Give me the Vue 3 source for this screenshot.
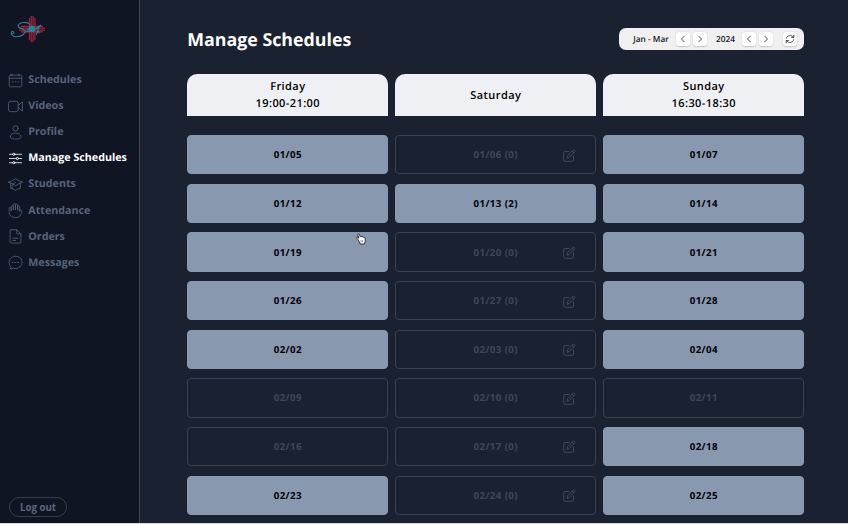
<script setup>
const nav = [
  { name: 'Schedules', icon: 'calendar' },
  { name: 'Videos', icon: 'video' },
  { name: 'Profile', icon: 'profile' },
  { name: 'Manage Schedules', icon: 'sliders', active: true },
  { name: 'Students', icon: 'cap' },
  { name: 'Attendance', icon: 'hand' },
  { name: 'Orders', icon: 'doc' },
  { name: 'Messages', icon: 'chat' },
]

const columns = [
  { day: 'Friday', time: '19:00-21:00' },
  { day: 'Saturday' },
  { day: 'Sunday', time: '16:30-18:30' },
]

const off = (label) => ({ label, off: true })
const on = (label) => ({ label })
const edit = (label) => ({ label, off: true, edit: true })

const cells = [
  on('01/05'), edit('01/06 (0)'), on('01/07'),
  on('01/12'), on('01/13 (2)'), on('01/14'),
  on('01/19'), edit('01/20 (0)'), on('01/21'),
  on('01/26'), edit('01/27 (0)'), on('01/28'),
  on('02/02'), edit('02/03 (0)'), on('02/04'),
  off('02/09'), edit('02/10 (0)'), off('02/11'),
  off('02/16'), edit('02/17 (0)'), on('02/18'),
  on('02/23'), edit('02/24 (0)'), on('02/25'),
]
</script>

<template>
  <div class="app">
    <aside class="sidebar">
      <svg class="logo" viewBox="0 0 36 28" fill="none">
        <g stroke="#a02336" stroke-width="1.25">
          <path d="M19.5 3v22M21.3 1v26M23.1 1v26M24.9 3v22" />
          <path d="M11 11.4h22M9 13.2h26M9 15h26M11 16.8h22" />
        </g>
        <circle cx="22" cy="14" r="3.3" fill="#168ba5" />
        <path d="M20 9.5C17 6 9 7 8 11c0 3 8 2 7 6C13 22 4 23 2 20c-1.200-2-.500-4 .800-3.800 1.500.300 1 2.300-.200 2.500M15 17c4 0 12-3 16-7-3 2-4 7-4.500 9.500M26.500 19c1-3 2.500-3 2.500-1M17 15l4-3" stroke="#347f9a" stroke-width="1.100" stroke-linecap="round" />
      </svg>

      <nav class="nav">
        <a v-for="item in nav" :key="item.name" class="nav-item" :class="{ active: item.active }">
          <svg class="nav-icon" viewBox="0 0 16 16">
            <g v-if="item.icon === 'calendar'">
              <rect x="1.300" y="2.300" width="13.400" height="12.400" rx="1.300" />
              <path d="M1.300 5.600h13.400M4.200 1v2.200M11.800 1v2.200" />
              <path d="M4.500 9.400h1M7.500 9.400h1M10.500 9.400h1" />
            </g>
            <g v-else-if="item.icon === 'video'">
              <rect x=".500" y="2.500" width="10.300" height="11" rx="2" />
              <path d="M10.800 7l4.500-4v10l-4.500-4" />
            </g>
            <g v-else-if="item.icon === 'profile'">
              <circle cx="8" cy="3.600" r="2.800" />
              <path d="M2.500 12.300C2.500 9.900 5 8.600 8 8.600s5.800 1.300 5.800 3.700c0 1.900-1.600 2.700-5.800 2.700s-5.500-.8-5.500-2.700z" />
            </g>
            <g v-else-if="item.icon === 'sliders'">
              <path d="M1.500 3.500H5M7.400 3.500h7.100M1.500 8h7.300M11.200 8h3.300M1.500 12.500H5M7.400 12.500h7.100" />
              <circle cx="6.200" cy="3.500" r="1.200" />
              <circle cx="10" cy="8" r="1.200" />
              <circle cx="6.200" cy="12.500" r="1.200" />
            </g>
            <g v-else-if="item.icon === 'cap'">
              <path d="M.5 5.500C3.500 4.600 6 3.300 8 1.800c2 1.500 4.500 2.800 7.500 3.700-2.800.8-5.500 2.200-7.500 3.900C6 7.700 3.300 6.300.5 5.500z" />
              <path d="M2.800 6.600v5.600c2 .2 3.800 1 5.200 2.200 1.400-1.200 3.200-2 5.200-2.200V6.600M8 5.800C5.800 6.600 4.500 8 4.500 10v2.500" />
            </g>
            <g v-else-if="item.icon === 'hand'">
              <path d="M3.500 8V3.800c0-1.400 2.200-1.400 2.200 0V7.500V1.500c0-1.400 2.300-1.400 2.300 0v6V2.200c0-1.300 2.300-1.300 2.300 0v5.500V4c0-1.300 2-1.300 2 0v5c.3-1.200.8-1.900 1.600-1.700.8.200.9.900.7 1.700-.6 4-2.300 6.500-6.300 6.500-4.900 0-7-2.500-7-6.200V5.500c0-1.400 2.200-1.400 2.200 0z" />
            </g>
            <g v-else-if="item.icon === 'doc'">
              <path d="M3.200.800h6.200l4.400 4.400V14a1 1 0 0 1-1 1H3.200a1 1 0 0 1-1-1V1.800a1 1 0 0 1 1-1zM9.300.800v3.400a1 1 0 0 0 1 1h3.400M5.200 9.800h5.400M5.200 12.300h3" />
            </g>
            <g v-else>
              <path d="M2.300 14.800c.9-.5 1.200-1.200.8-2C.2 10 .7 5.300 3.400 3c3.200-2.400 7.400-2 9.700.2 2.600 2.600 2.400 6.900-.2 9.400-2.200 2-5 2.200-7.200 1.400-.9.800-2.300 1.100-3.400.8z" />
              <path d="M4.700 8h.9M7.600 8h.9M10.500 8h.9" />
            </g>
          </svg>
          <span>{{ item.name }}</span>
        </a>
      </nav>

      <button class="logout">Log out</button>
    </aside>

    <main class="main">
      <header class="top">
        <h1>Manage Schedules</h1>
        <div class="picker">
          <span class="period">Jan - Mar</span>
          <button class="step"><svg viewBox="0 0 14 14"><path d="M8.200 4.200L5.500 7l2.700 2.800" /></svg></button>
          <button class="step"><svg viewBox="0 0 14 14"><path d="M5.800 4.200L8.500 7l-2.700 2.800" /></svg></button>
          <span class="year">2024</span>
          <button class="step"><svg viewBox="0 0 14 14"><path d="M8.200 4.200L5.500 7l2.700 2.800" /></svg></button>
          <button class="step"><svg viewBox="0 0 14 14"><path d="M5.800 4.200L8.500 7l-2.700 2.800" /></svg></button>
          <button class="step refresh">
            <svg viewBox="0 0 14 14"><path d="M3.400 6.200C3.900 3.500 8.300 2 10.500 5.300M10.800 3v2.400H8.500M10.600 7.800C10.100 10.500 5.700 12 3.500 8.700M3.200 11V8.600h2.300" /></svg>
          </button>
        </div>
      </header>

      <div class="grid heads">
        <div v-for="c in columns" :key="c.day" class="head">
          <span>{{ c.day }}</span>
          <span v-if="c.time">{{ c.time }}</span>
        </div>
      </div>

      <div class="grid cells">
        <div v-for="c in cells" :key="c.label" class="cell" :class="{ off: c.off }">
          <span>{{ c.label }}</span>
          <svg v-if="c.edit" class="edit" viewBox="0 0 14 14">
            <path d="M7 2.500H3.200A1.500 1.500 0 0 0 1.700 4v6.800a1.500 1.500 0 0 0 1.500 1.500H10a1.500 1.500 0 0 0 1.500-1.500V7" />
            <path d="M5.200 9l.5-2.300 5.500-5.500c.6-.6 2.200.8 1.500 1.600L7.300 8.400zM10.200 2.200l1.500 1.500" />
          </svg>
        </div>
      </div>
    </main>

    <svg class="cursor" viewBox="0 0 10 12">
      <path d="M2.300 7L1 5.500c-.8-1 .3-1.800 1.100-1L3 5.300 1.900 2C1.500.7 2.800.3 3.300 1.400L4.400 4c.4-.9 1.400-.7 1.700.1.500-.6 1.300-.4 1.600.4.800-.4 1.500.1 1.500 1v2.600c0 .9-.7 1.400-.7 2.900H4c0-1.600-.9-2.500-1.700-4z" fill="#fff" stroke="#111" stroke-width=".8" />
      <path d="M5 7.200v2M6.500 7.200v2" stroke="#222" stroke-width=".5" />
    </svg>
  </div>
</template>

<style>
body {
  margin: 0;
  background: #1a2232;
}
</style>

<style scoped>
.app {
  position: relative;
  box-sizing: border-box;
  width: 848px;
  height: 524px;
  display: flex;
  overflow: hidden;
  background: #1a2232;
  border-bottom: 1px solid #d5d7da;
  font-family: "Open Sans", "Noto Sans", sans-serif;
  text-rendering: geometricPrecision;
}
.sidebar {
  box-sizing: border-box;
  width: 140px;
  flex: none;
  display: flex;
  flex-direction: column;
  align-items: flex-start;
  padding: 15px 0 6px 8px;
  background: #0f1522;
  border-right: 1px solid #43484f;
}
.logo {
  width: 38px;
  height: 28px;
  margin-left: 1px;
}
.nav {
  display: flex;
  flex-direction: column;
  margin-top: 24px;
}
.nav-item {
  height: 26.100px;
  display: flex;
  align-items: center;
  gap: 5.300px;
  color: #57647d;
  font-size: 10.700px;
  font-weight: 700;
  white-space: nowrap;
}
.nav-item.active {
  color: #fff;
}
.nav-icon {
  width: 15px;
  height: 15px;
  flex: none;
  fill: none;
  stroke: currentColor;
  stroke-width: 0.850;
  stroke-linecap: round;
  stroke-linejoin: round;
}
button {
  padding: 0;
  font-family: inherit;
}
.logout {
  box-sizing: border-box;
  width: 58px;
  height: 20px;
  margin-top: auto;
  margin-left: 1px;
  padding-top: 1px;
  border: 1px solid #363d4b;
  border-radius: 10px;
  background: none;
  color: #5d677b;
  font-size: 9.700px;
  font-weight: 700;
  line-height: 17px;
}
.main {
  width: 617px;
  padding: 28px 0 0 47.300px;
}
.top {
  height: 22px;
  display: flex;
  align-items: center;
  justify-content: space-between;
}
h1 {
  margin: 0;
  padding-top: 2px;
  color: #fff;
  font-size: 17.800px;
  font-weight: 700;
  line-height: 22px;
  white-space: nowrap;
}
.picker {
  box-sizing: border-box;
  width: 185px;
  height: 22px;
  display: flex;
  align-items: center;
  padding-left: 14px;
  border-radius: 7px;
  background: #f0f0f1;
  color: #17191e;
  font-size: 8.300px;
  font-weight: 600;
}
.period {
  width: 43px;
  white-space: nowrap;
}
.year {
  width: 29.500px;
  text-align: center;
  margin: 0 2px 0 4px;
}
.step {
  width: 14px;
  height: 14px;
  flex: none;
  display: flex;
  border: 0;
  border-radius: 3px;
  background: #fff;
  box-shadow: 0 0.500px 1.500px rgba(0, 0, 0, 0.180);
}
.step + .step {
  margin-left: 2.500px;
}
.step + .refresh {
  margin-left: 10px;
}
.step svg {
  width: 14px;
  height: 14px;
  fill: none;
  stroke: #22252a;
  stroke-width: 0.800;
  stroke-linecap: round;
  stroke-linejoin: round;
}
.grid {
  display: grid;
  grid-template-columns: repeat(3, 201px);
  column-gap: 7px;
}
.heads {
  margin-top: 23.500px;
}
.head {
  box-sizing: border-box;
  height: 42.500px;
  padding-top: 2.500px;
  display: flex;
  flex-direction: column;
  align-items: center;
  justify-content: center;
  border-radius: 10px 10px 0 0;
  background: #eff0f4;
  color: #000;
  font-size: 11px;
  font-weight: 600;
  letter-spacing: 0.420px;
  line-height: 16.700px;
}
.cells {
  margin-top: 19.100px;
  grid-auto-rows: 39.300px;
  row-gap: 9.350px;
}
.cell {
  position: relative;
  box-sizing: border-box;
  display: flex;
  align-items: center;
  justify-content: center;
  border: 1px solid #8899b0;
  border-radius: 4px;
  background: #8798af;
  color: #000;
  font-size: 9.700px;
  font-weight: 700;
  letter-spacing: 0.400px;
}
.cell.off {
  background: none;
  border-color: #394251;
  color: #3f4857;
}
.edit {
  position: absolute;
  right: 19.500px;
  top: 12.500px;
  width: 14px;
  height: 14px;
  fill: none;
  stroke: #465060;
  stroke-width: 0.850;
  stroke-linecap: round;
  stroke-linejoin: round;
}
.cursor {
  position: absolute;
  left: 355.500px;
  top: 233px;
  width: 10px;
  height: 12px;
  fill: none;
}
</style>
